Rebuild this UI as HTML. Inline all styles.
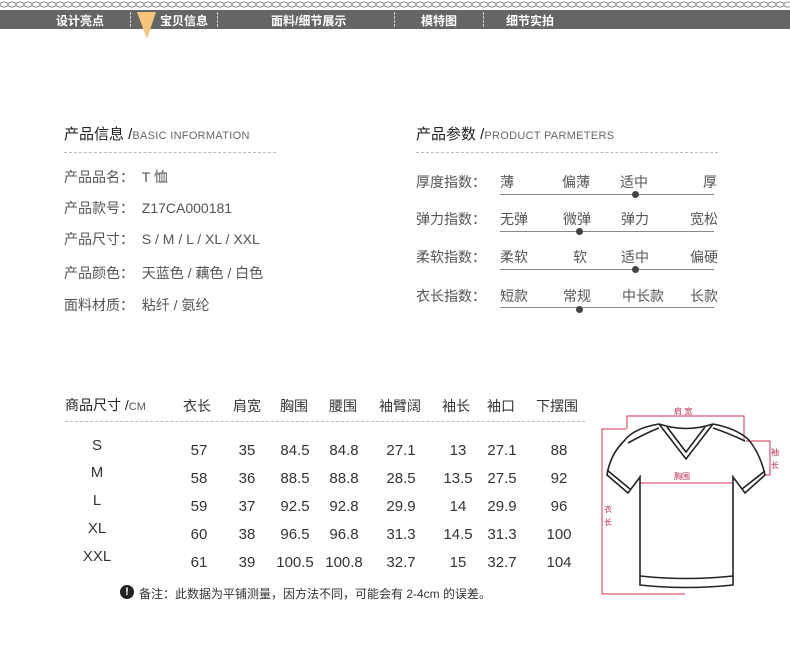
<!DOCTYPE html><html><head><meta charset="utf-8"><style>
body{margin:0;width:790px;height:649px;background:#fff;position:relative;overflow:hidden;font-family:"Liberation Sans","Noto Sans CJK SC",sans-serif;color:#333}
.a{position:absolute;white-space:nowrap}
.nav{position:absolute;left:0;top:10px;width:790px;height:19px;background:#656565}
.nav span{position:absolute;top:2px;font-size:12px;color:#fff;font-weight:bold}
.sep{position:absolute;top:2px;height:15px;border-left:1px dashed #ccc}
.h{font-size:15px;color:#222}
.h small{font-size:11px;color:#666;letter-spacing:.3px}
.l{font-size:14px;color:#555}
.line{position:absolute;height:1px;background:#888}
.dot{position:absolute;width:7px;height:7px;border-radius:50%;background:#444}
.t{position:absolute;font-size:15px;color:#333;transform:translateX(-50%)}
</style></head><body>
<svg class="a" style="left:0;top:0" width="790" height="9"><defs><pattern id="p" width="8" height="9" patternUnits="userSpaceOnUse"><ellipse cx="4" cy="4.5" rx="4" ry="2.5" fill="none" stroke="#888" stroke-width="1"/></pattern></defs><rect width="790" height="9" fill="url(#p)"/></svg>
<div class="nav">
<span style="left:56px">设计亮点</span><div class="sep" style="left:130px"></div>
<span style="left:160px">宝贝信息</span><div class="sep" style="left:217px"></div>
<span style="left:271px">面料/细节展示</span><div class="sep" style="left:394px"></div>
<span style="left:421px">模特图</span><div class="sep" style="left:483px"></div>
<span style="left:506px">细节实拍</span>
</div>
<svg class="a" style="left:136px;top:12px" width="22" height="28"><polygon points="1,0 20,0 11,27" fill="#f6c57b"/></svg>

<div class="a h" style="left:64px;top:123px">产品信息 /<small>BASIC INFORMATION</small></div>
<div class="a" style="left:64px;top:152px;width:212px;border-top:1px dashed #bbb"></div>
<div class="a l" style="left:64px;top:167px">产品品名：&nbsp; T 恤</div>
<div class="a l" style="left:64px;top:198px">产品款号：&nbsp; Z17CA000181</div>
<div class="a l" style="left:64px;top:229px">产品尺寸：&nbsp; S / M / L / XL / XXL</div>
<div class="a l" style="left:64px;top:263px">产品颜色：&nbsp; 天蓝色 / 藕色 / 白色</div>
<div class="a l" style="left:64px;top:295px">面料材质：&nbsp; 粘纤 / 氨纶</div>

<div class="a h" style="left:416px;top:123px">产品参数 /<small>PRODUCT PARMETERS</small></div>
<div class="a" style="left:416px;top:152px;width:302px;border-top:1px dashed #bbb"></div>

<div class="a l" style="left:416px;top:172px">厚度指数：</div>
<div class="a l" style="left:500px;top:172px">薄</div><div class="a l" style="left:562px;top:172px">偏薄</div><div class="a l" style="left:620px;top:172px">适中</div><div class="a l" style="left:703px;top:172px">厚</div>
<div class="line" style="left:500px;top:194px;width:214px"></div><div class="dot" style="left:632px;top:191px"></div>

<div class="a l" style="left:416px;top:209px">弹力指数：</div>
<div class="a l" style="left:500px;top:209px">无弹</div><div class="a l" style="left:563px;top:209px">微弹</div><div class="a l" style="left:621px;top:209px">弹力</div><div class="a l" style="left:690px;top:209px">宽松</div>
<div class="line" style="left:500px;top:231px;width:214px"></div><div class="dot" style="left:576px;top:228px"></div>

<div class="a l" style="left:416px;top:247px">柔软指数：</div>
<div class="a l" style="left:500px;top:247px">柔软</div><div class="a l" style="left:573px;top:247px">软</div><div class="a l" style="left:621px;top:247px">适中</div><div class="a l" style="left:690px;top:247px">偏硬</div>
<div class="line" style="left:500px;top:269px;width:214px"></div><div class="dot" style="left:632px;top:266px"></div>

<div class="a l" style="left:416px;top:286px">衣长指数：</div>
<div class="a l" style="left:500px;top:286px">短款</div><div class="a l" style="left:563px;top:286px">常规</div><div class="a l" style="left:622px;top:286px">中长款</div><div class="a l" style="left:690px;top:286px">长款</div>
<div class="line" style="left:500px;top:307px;width:214px"></div><div class="dot" style="left:576px;top:306px"></div>

<div class="a" style="left:65px;top:395px;font-size:14px;color:#222">商品尺寸 /<span style="font-size:11px;color:#555">CM</span></div>
<div class="t" style="left:197px;top:396px;font-size:14px">衣长</div>
<div class="t" style="left:247px;top:396px;font-size:14px">肩宽</div>
<div class="t" style="left:294px;top:396px;font-size:14px">胸围</div>
<div class="t" style="left:343px;top:396px;font-size:14px">腰围</div>
<div class="t" style="left:400px;top:396px;font-size:14px">袖臂阔</div>
<div class="t" style="left:456px;top:396px;font-size:14px">袖长</div>
<div class="t" style="left:501px;top:396px;font-size:14px">袖口</div>
<div class="t" style="left:557px;top:396px;font-size:14px">下摆围</div>
<div class="a" style="left:65px;top:421px;width:520px;border-top:1px dashed #bbb"></div>

<div class="t" style="left:97px;top:437px">S</div>
<div class="t" style="left:97px;top:464px">M</div>
<div class="t" style="left:97px;top:492px">L</div>
<div class="t" style="left:97px;top:520px">XL</div>
<div class="t" style="left:97px;top:548px">XXL</div>

<div class="t" style="left:199px;top:442px">57</div><div class="t" style="left:247px;top:442px">35</div><div class="t" style="left:295px;top:442px">84.5</div><div class="t" style="left:344px;top:442px">84.8</div><div class="t" style="left:401px;top:442px">27.1</div><div class="t" style="left:458px;top:442px">13</div><div class="t" style="left:502px;top:442px">27.1</div><div class="t" style="left:559px;top:442px">88</div>
<div class="t" style="left:199px;top:470px">58</div><div class="t" style="left:247px;top:470px">36</div><div class="t" style="left:295px;top:470px">88.5</div><div class="t" style="left:344px;top:470px">88.8</div><div class="t" style="left:401px;top:470px">28.5</div><div class="t" style="left:458px;top:470px">13.5</div><div class="t" style="left:502px;top:470px">27.5</div><div class="t" style="left:559px;top:470px">92</div>
<div class="t" style="left:199px;top:498px">59</div><div class="t" style="left:247px;top:498px">37</div><div class="t" style="left:295px;top:498px">92.5</div><div class="t" style="left:344px;top:498px">92.8</div><div class="t" style="left:401px;top:498px">29.9</div><div class="t" style="left:458px;top:498px">14</div><div class="t" style="left:502px;top:498px">29.9</div><div class="t" style="left:559px;top:498px">96</div>
<div class="t" style="left:199px;top:526px">60</div><div class="t" style="left:247px;top:526px">38</div><div class="t" style="left:295px;top:526px">96.5</div><div class="t" style="left:344px;top:526px">96.8</div><div class="t" style="left:401px;top:526px">31.3</div><div class="t" style="left:458px;top:526px">14.5</div><div class="t" style="left:502px;top:526px">31.3</div><div class="t" style="left:559px;top:526px">100</div>
<div class="t" style="left:199px;top:554px">61</div><div class="t" style="left:247px;top:554px">39</div><div class="t" style="left:295px;top:554px">100.5</div><div class="t" style="left:344px;top:554px">100.8</div><div class="t" style="left:401px;top:554px">32.7</div><div class="t" style="left:458px;top:554px">15</div><div class="t" style="left:502px;top:554px">32.7</div><div class="t" style="left:559px;top:554px">104</div>

<div class="a" style="left:120px;top:585px;width:14px;height:14px;border-radius:50%;background:#222;color:#fff;font-size:11px;font-weight:bold;text-align:center;line-height:14px">!</div>
<div class="a" style="left:139px;top:585px;font-size:12px;color:#333">备注：此数据为平铺测量，因方法不同，可能会有 2-4cm 的误差。</div>

<svg class="a" style="left:590px;top:395px" width="200" height="210" font-size="8" fill="#c03050">
<g fill="none" stroke="#d0304c" stroke-width="1">
<polyline points="37,34 37,21 154,21 154,44"/>
<polyline points="12,199 12,34 36,34"/>
<polyline points="156,46 180,46 180,80 175,80"/>
<line x1="50" y1="88" x2="143" y2="88"/>
<line x1="50" y1="80" x2="50" y2="96"/><line x1="143" y1="80" x2="143" y2="96"/>
<line x1="12" y1="199" x2="95" y2="199"/>
</g>
<text x="84" y="19" stroke="none">肩 宽</text>
<text x="84" y="84" stroke="none">胸围</text>
<text x="181" y="60" stroke="none">袖</text><text x="181" y="73" stroke="none">长</text>
<text x="14" y="117" stroke="none">衣</text><text x="14" y="130" stroke="none">长</text>
<g fill="none" stroke="#222" stroke-width="1.6">
<path d="M69,29 L96,64 L123,29"/>
<path d="M77,32 L96,57 L115,32"/>
<path d="M69,29 Q96,38 123,29"/>
<path d="M69,29 Q44,33 34,46 Q20,60 17,80 L38,98 L50,82 L50,190 Q96,195 143,190 L143,82 L155,98 L175,80 Q170,58 158,44 Q145,33 123,29"/>
<path d="M38,48 Q56,38 69,33"/><path d="M155,46 Q138,38 123,33"/>
<path d="M17,75 L40,94"/><path d="M175,76 L152,94"/>
<path d="M50,181 Q96,186 143,181"/>
</g>
</svg>
</body></html>
